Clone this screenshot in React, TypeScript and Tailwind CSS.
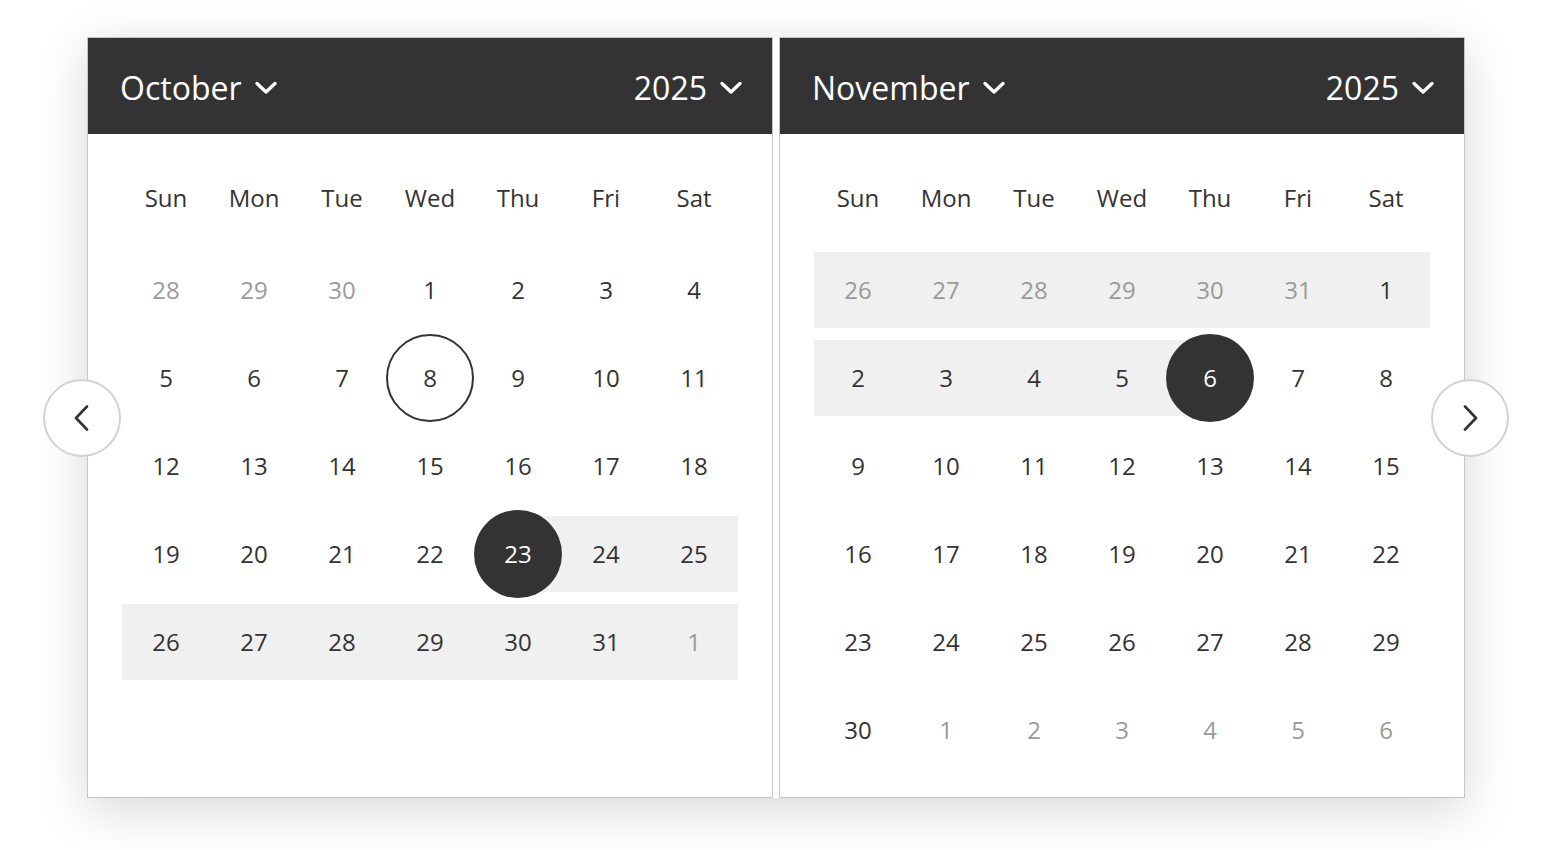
import { type ReactNode } from "react";

type Day = {
  n: number;
  muted?: boolean;
  band?: "full" | "right" | "left";
  mark?: "ring" | "solid";
};

const FONT = "font-['Open_Sans',_'Noto_Sans',_sans-serif]";
const WEEKDAYS = ["Sun", "Mon", "Tue", "Wed", "Thu", "Fri", "Sat"];

const october: Day[][] = [
  [{ n: 28, muted: true }, { n: 29, muted: true }, { n: 30, muted: true }, { n: 1 }, { n: 2 }, { n: 3 }, { n: 4 }],
  [{ n: 5 }, { n: 6 }, { n: 7 }, { n: 8, mark: "ring" }, { n: 9 }, { n: 10 }, { n: 11 }],
  [{ n: 12 }, { n: 13 }, { n: 14 }, { n: 15 }, { n: 16 }, { n: 17 }, { n: 18 }],
  [
    { n: 19 }, { n: 20 }, { n: 21 }, { n: 22 },
    { n: 23, mark: "solid", band: "right" },
    { n: 24, band: "full" }, { n: 25, band: "full" },
  ],
  [
    { n: 26, band: "full" }, { n: 27, band: "full" }, { n: 28, band: "full" },
    { n: 29, band: "full" }, { n: 30, band: "full" }, { n: 31, band: "full" },
    { n: 1, muted: true, band: "full" },
  ],
];

const november: Day[][] = [
  [
    { n: 26, muted: true, band: "full" }, { n: 27, muted: true, band: "full" },
    { n: 28, muted: true, band: "full" }, { n: 29, muted: true, band: "full" },
    { n: 30, muted: true, band: "full" }, { n: 31, muted: true, band: "full" },
    { n: 1, band: "full" },
  ],
  [
    { n: 2, band: "full" }, { n: 3, band: "full" }, { n: 4, band: "full" },
    { n: 5, band: "full" }, { n: 6, mark: "solid", band: "left" },
    { n: 7 }, { n: 8 },
  ],
  [{ n: 9 }, { n: 10 }, { n: 11 }, { n: 12 }, { n: 13 }, { n: 14 }, { n: 15 }],
  [{ n: 16 }, { n: 17 }, { n: 18 }, { n: 19 }, { n: 20 }, { n: 21 }, { n: 22 }],
  [{ n: 23 }, { n: 24 }, { n: 25 }, { n: 26 }, { n: 27 }, { n: 28 }, { n: 29 }],
  [
    { n: 30 }, { n: 1, muted: true }, { n: 2, muted: true }, { n: 3, muted: true },
    { n: 4, muted: true }, { n: 5, muted: true }, { n: 6, muted: true },
  ],
];

function ChevronDown() {
  return (
    <svg width="24" height="16" viewBox="0 0 24 16" fill="none" className="shrink-0">
      <polyline
        points="3,3.5 12,12 21,3.5"
        stroke="white"
        strokeWidth="3.4"
        strokeLinecap="round"
        strokeLinejoin="round"
      />
    </svg>
  );
}

function HeaderSelect({ children }: { children: ReactNode }) {
  return (
    <div className="flex items-center gap-3 text-[32px] leading-none text-white">
      <span>{children}</span>
      <ChevronDown />
    </div>
  );
}

function DayCell({ day }: { day: Day }) {
  const band =
    day.band === "full"
      ? "bg-[#f0f0f0]"
      : day.band === "right"
        ? "bg-[linear-gradient(to_right,transparent_50%,#f0f0f0_50%)]"
        : day.band === "left"
          ? "bg-[linear-gradient(to_right,#f0f0f0_50%,transparent_50%)]"
          : "";

  const mark =
    day.mark === "solid"
      ? "bg-[#333333] text-white"
      : day.mark === "ring"
        ? "border-2 border-[#333333] text-[#333333]"
        : day.muted
          ? "text-[#9a9a9a]"
          : "text-[#333333]";

  return (
    <div className={`flex h-[88px] items-center justify-center bg-clip-content py-[6px] ${band}`}>
      <span
        className={`flex h-[88px] w-[88px] shrink-0 items-center justify-center rounded-full text-[24px] ${mark}`}
      >
        {day.n}
      </span>
    </div>
  );
}

function MonthPanel({ month, year, weeks }: { month: string; year: string; weeks: Day[][] }) {
  return (
    <div className="flex w-[686px] flex-col border border-[#c6c6c6] bg-white">
      <div className="flex h-[96px] items-center justify-between bg-[#333333] pl-8 pr-[29px] pt-[3px]">
        <HeaderSelect>{month}</HeaderSelect>
        <HeaderSelect>{year}</HeaderSelect>
      </div>
      <div className="px-[34px] pb-[23px] pt-5">
        <div className="grid h-[88px] grid-cols-7 items-center text-center text-[24px] text-[#333333]">
          {WEEKDAYS.map((w) => (
            <span key={w}>{w}</span>
          ))}
        </div>
        <div className="mt-1 grid grid-cols-7">
          {weeks.flat().map((d, i) => (
            <DayCell key={i} day={d} />
          ))}
        </div>
      </div>
    </div>
  );
}

function NavButton({ side }: { side: "left" | "right" }) {
  return (
    <button
      className={`absolute top-1/2 flex h-[78px] w-[78px] -translate-y-1/2 items-center justify-center rounded-full border-2 border-[#d2d2d2] bg-white ${
        side === "left" ? "left-[-44px]" : "right-[-44px]"
      }`}
    >
      <svg width="16" height="26" viewBox="0 0 16 26" fill="none">
        <polyline
          points={side === "left" ? "13,1.5 2,13 13,24.5" : "3,1.5 14,13 3,24.5"}
          stroke="#333333"
          strokeWidth="2.6"
          strokeLinecap="round"
          strokeLinejoin="round"
        />
      </svg>
    </button>
  );
}

export default function App() {
  return (
    <div className={`min-h-[850px] bg-white pt-[37px] ${FONT}`}>
      <div className="relative ml-[87px] flex w-[1378px] gap-[6px] bg-white shadow-[0_12px_48px_rgba(0,0,0,0.16)]">
        <MonthPanel month="October" year="2025" weeks={october} />
        <MonthPanel month="November" year="2025" weeks={november} />
        <NavButton side="left" />
        <NavButton side="right" />
      </div>
    </div>
  );
}
